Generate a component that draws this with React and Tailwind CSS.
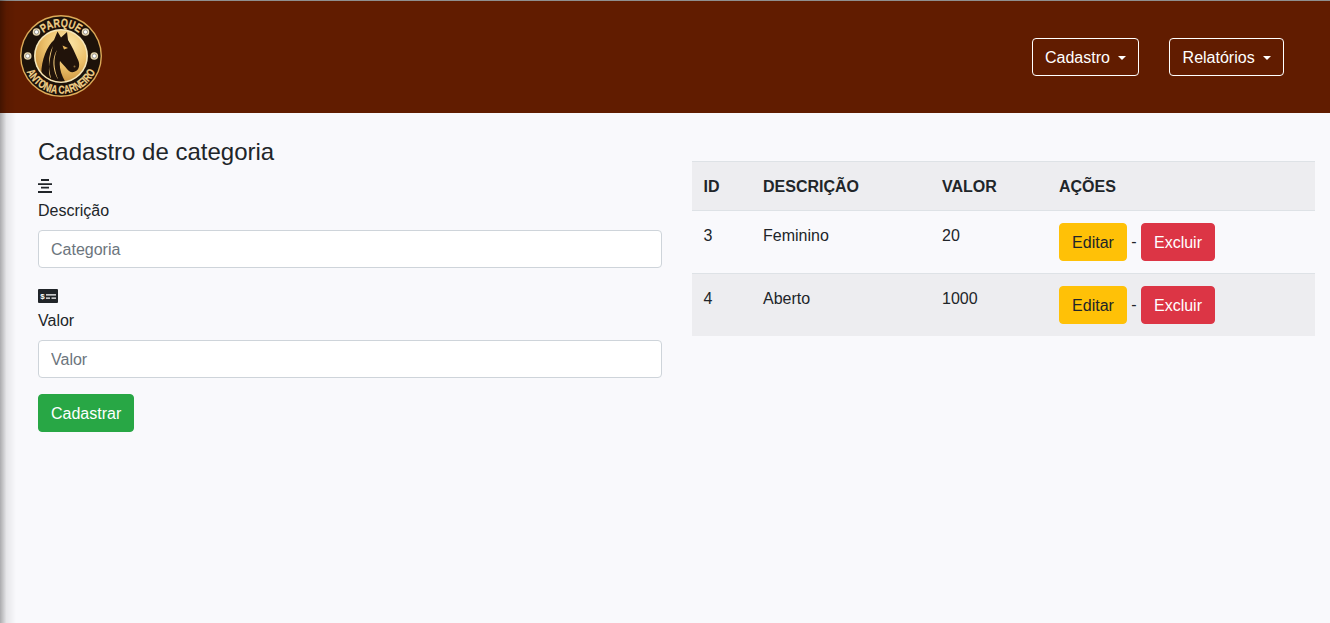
import React from "react";

function Logo() {
  return (
    <svg width="82" height="82" viewBox="0 0 82 82" className="block mb-[2px]">
      <defs>
        <radialGradient id="g" cx="62%" cy="28%" r="80%">
          <stop offset="0%" stopColor="#fde9ad" />
          <stop offset="55%" stopColor="#ecc06a" />
          <stop offset="100%" stopColor="#c68b38" />
        </radialGradient>
        <clipPath id="inner"><circle cx="41" cy="41" r="25.4" /></clipPath>
        <path id="top" d="M12 41 A29 29 0 0 1 70 41" />
        <path id="bot" d="M3.2 41 A37.8 37.8 0 0 0 78.8 41" />
      </defs>
      <circle cx="41" cy="41" r="41" fill="#dcaa58" />
      <circle cx="41" cy="41" r="39.6" fill="#1d1209" />
      <circle cx="41" cy="41" r="27" fill="#f6e6b8" />
      <circle cx="41" cy="41" r="25.4" fill="url(#g)" />
      <text fontSize="12" fontWeight="700" fill="#f0cf88" stroke="#f0cf88" strokeWidth="0.25" fontFamily="Liberation Sans, sans-serif">
        <textPath href="#top" startOffset="50%" textAnchor="middle" textLength="38" lengthAdjust="spacingAndGlyphs">PARQUE</textPath>
      </text>
      <text fontSize="11.5" fontWeight="700" fill="#f0cf88" stroke="#f0cf88" strokeWidth="0.25" fontFamily="Liberation Sans, sans-serif">
        <textPath href="#bot" startOffset="50%" textAnchor="middle" textLength="86" lengthAdjust="spacingAndGlyphs">ANTONIA CARNEIRO</textPath>
      </text>
      {[[7.7,41],[74.3,41],[16.5,17],[65.5,17]].map(([x,y],i)=>(
        <g key={i}>
          <circle cx={x} cy={y} r="3.8" fill="#e8d7b0" />
          <circle cx={x} cy={y} r="2.1" fill="#fff" stroke="#666" strokeWidth="0.6" />
        </g>
      ))}
      <g clipPath="url(#inner)">
        <path d="M37.5 16.5 L41 22.5 L47 17 L48 25 C52 31 55 38 58.5 46 C60 50 59 55 55 56.5 C52 58 49 57 47 54 C45 51 42 49 40 46 C39 52 41 60 46 68 L22 68 C19 50 26 32 34 25 Z" fill="#21130a" />
        <path d="M33 31 C28 40 28 52 31 63 C29 62 27 52 33 31Z" fill="#f0c878" />
        <path d="M37 35 C33 44 34 54 38 64 C35 60 30 46 37 35Z" fill="#f0c878" />
        <path d="M42.5 30.5 L48 33 L44 34.5Z" fill="#e9b65c" />
        <circle cx="54.5" cy="51.5" r="1" fill="#8a6a3a" />
      </g>
    </svg>
  );
}

function Caret() {
  return <span className="ml-2 inline-block w-0 h-0 border-x-[4.8px] border-x-transparent border-t-[4.8px] border-t-white align-[3px]" />;
}

function NavBtn({ children, className }) {
  return (
    <button className={`pt-[7px] pb-[5px] border border-white rounded text-left text-white text-base leading-6 whitespace-nowrap ${className}`}>
      {children}
      <Caret />
    </button>
  );
}

function Field({ icon, label, placeholder, className }) {
  return (
    <div className={className}>
      <div className="h-[14px] flex items-start">{icon}</div>
      <label className="block mt-[6px] mb-[7px] text-base leading-6">{label}</label>
      <input
        placeholder={placeholder}
        className="block w-full h-[38px] px-3 pt-[2px] bg-white border border-[#ced4da] rounded text-base placeholder:text-[#6c757d] outline-none"
      />
    </div>
  );
}

function Row({ id, desc, valor, striped }) {
  return (
    <tr className={`border-t border-[#dee2e6] ${striped ? "bg-[#ededf0]" : ""}`}>
      <td className="pl-[11.5px] pr-3 pt-[13px] pb-[11px] align-top">{id}</td>
      <td className="px-3 pt-[13px] pb-[11px] align-top">{desc}</td>
      <td className="px-3 pt-[13px] pb-[11px] align-top">{valor}</td>
      <td className="px-3 py-3 align-top">
        <div className="flex items-center">
          <button className="w-[68px] pt-[7px] pb-[5px] border border-[#ffc107] leading-6 bg-[#ffc107] text-[#212529] rounded">Editar</button>
          <span className="w-[14px] text-center">-</span>
          <button className="w-[74px] pt-[7px] pb-[5px] border border-[#dc3545] leading-6 bg-[#dc3545] text-white rounded">Excluir</button>
        </div>
      </td>
    </tr>
  );
}

export default function App() {
  return (
    <div className="relative min-h-[623px] bg-[#f9f9fc] text-[#212529] text-base overflow-hidden font-['Liberation_Sans',Arial,sans-serif]">
      <header className="h-[113px] bg-[#611c00] border-t border-[#8f8f8f] flex items-center justify-between pl-5 pr-[46px]">
        <Logo />
        <div className="flex gap-[30px]">
          <NavBtn className="w-[107px] pl-3">Cadastro</NavBtn>
          <NavBtn className="w-[115px] pl-[12.6px]">Relatórios</NavBtn>
        </div>
      </header>
      <main className="flex pl-[38px] pr-[15px]">
        <section className="w-[624px] shrink-0">
          <h1 className="mt-[22px] mb-[10px] text-2xl leading-[34px] font-medium">Cadastro de categoria</h1>
          <Field
            className="mb-[21px]"
            label="Descrição"
            placeholder="Categoria"
            icon={
              <svg width="14" height="14" viewBox="0 0 14 14">
                <path d="M3 0h8v2H3zM0 4.2h14V6H0zM3 7.7h8v1.7H3zM0 12h14v2H0z" fill="#212529" />
              </svg>
            }
          />
          <Field
            className="mb-4"
            label="Valor"
            placeholder="Valor"
            icon={
              <svg width="20" height="14" viewBox="0 0 20 14">
                <rect width="20" height="14" rx="1" fill="#212529" />
                <path d="M8 5.2h10v1.3H8zM8 8.4h4v1.3H8zM13.5 8.4h4.5v1.3h-4.5z" fill="#fff" />
                <text x="2.2" y="10.2" fontSize="8" fontWeight="700" fill="#fff" fontFamily="Liberation Sans, sans-serif">$</text>
              </svg>
            }
          />
          <button className="px-3 pt-[7px] pb-[5px] border border-[#28a745] leading-6 bg-[#28a745] text-white rounded">Cadastrar</button>
        </section>
        <section className="ml-[30px] flex-1 pt-[48px]">
          <table className="w-full border-collapse text-left">
            <thead>
              <tr className="bg-[#ededf0] border-t border-[#dee2e6]">
                <th className="w-[59px] pl-[11.5px] pr-3 pt-px h-[49px] font-bold">ID</th>
                <th className="w-[179px] px-3 pt-px font-bold">DESCRIÇÃO</th>
                <th className="w-[117px] px-3 pt-px font-bold">VALOR</th>
                <th className="px-3 pt-px font-bold">AÇÕES</th>
              </tr>
            </thead>
            <tbody>
              <Row id="3" desc="Feminino" valor="20" />
              <Row id="4" desc="Aberto" valor="1000" striped />
            </tbody>
          </table>
        </section>
      </main>
      <div className="absolute left-0 top-0 bottom-0 w-[16px] pointer-events-none bg-gradient-to-r from-[#00000050] via-[#00000014] via-40% to-transparent" />
    </div>
  );
}
